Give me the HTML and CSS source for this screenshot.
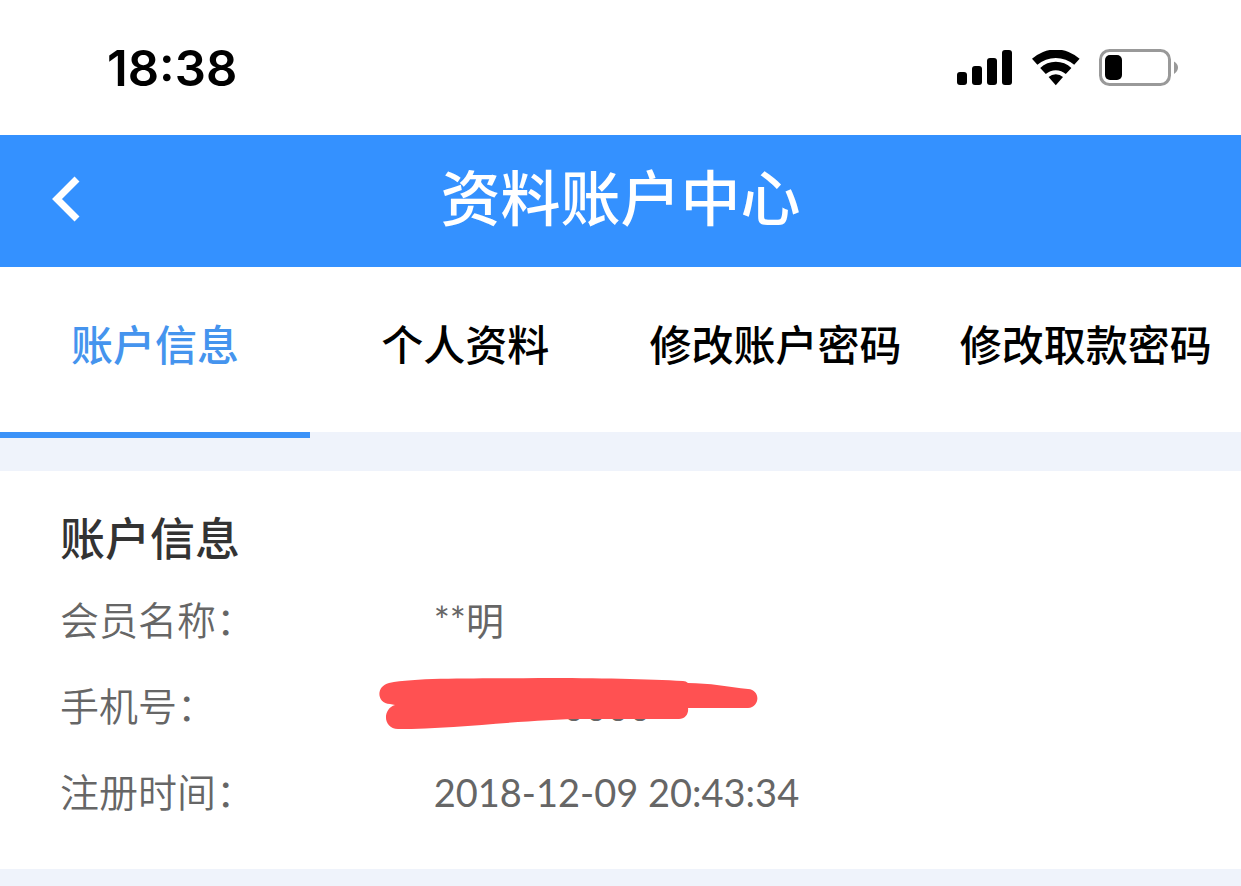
FILE: index.html
```html
<!DOCTYPE html>
<html lang="zh-CN">
<head>
<meta charset="utf-8">
<meta name="viewport" content="width=device-width, initial-scale=1">
<title>资料账户中心</title>
<link rel="stylesheet" href="styles.css">
</head>
<body>
<div class="status">
  <time class="clock">18:38</time>
  <div class="indicators">
    <svg width="56" height="36" viewBox="0 0 56 36" aria-hidden="true">
      <rect x="0" y="22" width="10" height="13" rx="3"/>
      <rect x="15" y="16" width="10" height="19" rx="3"/>
      <rect x="30" y="8" width="10" height="27" rx="3"/>
      <rect x="45" y="0" width="10" height="35" rx="3"/>
    </svg>
    <svg class="wifi" width="48" height="36" viewBox="0 0 48 36" aria-hidden="true">
      <path d="M0 8.8L5.4 14.8A28 28 0 0 1 42.2 14.8L47.6 8.8A35 35 0 0 0 0 8.8Z"/>
      <path d="M8.2 18L13.8 24A15 15 0 0 1 33.8 24L39.4 18A22.5 22.5 0 0 0 8.2 18Z"/>
      <path d="M16.6 27L23.8 35.2L31 27A10.5 10.5 0 0 0 16.6 27Z"/>
    </svg>
    <svg class="battery" width="80" height="38" viewBox="0 0 80 38" aria-hidden="true">
      <rect class="shell" x="1.5" y="1.5" width="69" height="34" rx="9"/>
      <rect x="6" y="6" width="17" height="25" rx="5"/>
      <path class="cap" d="M75 12.5Q79 15 79 18.5T75 25Z"/>
    </svg>
  </div>
</div>
<header class="bar">
  <button class="back" type="button" aria-label="返回">
    <svg width="28" height="46" viewBox="0 0 28 46" aria-hidden="true"><path d="M25 3L5 23L25 43"/></svg>
  </button>
  <h1 class="title">资料账户中心</h1>
</header>
<nav class="tabs">
  <a class="tab active" href="#account" aria-current="page">账户信息</a>
  <a class="tab" href="#profile">个人资料</a>
  <a class="tab" href="#password">修改账户密码</a>
  <a class="tab" href="#withdraw">修改取款密码</a>
</nav>
<main class="panel" id="account">
  <h2 class="heading">账户信息</h2>
  <dl class="info">
    <div class="row"><dt>会员名称：</dt><dd>**明</dd></div>
    <div class="row"><dt>手机号：</dt><dd class="masked">********0000
      <svg class="scribble" width="380" height="52" viewBox="0 0 380 52" aria-hidden="true">
        <path d="M11 26C-3 25-3 8 10 5C40-1 100 1 160 0C220 0 270 1 304 3Q307 3 309 5C330 5 350 9 369 11C382 12 381 29 369 30L309 30C310 36 306 41 300 41H205C150 41 80 51 19 51C4 51 3 31 16 27Z"/>
      </svg>
    </dd></div>
    <div class="row"><dt>注册时间：</dt><dd>2018-12-09 20:43:34</dd></div>
  </dl>
</main>
</body>
</html>
```
FILE: styles.css
```css
* { box-sizing: border-box; }
body {
  margin: 0;
  background: #eff3fb;
  color: #000;
  font-family: Lato, "Noto Sans CJK SC", sans-serif;
}
svg { display: block; }
.status {
  display: flex;
  align-items: center;
  justify-content: space-between;
  height: 135px;
  padding: 0 62px 0 107px;
  background: #fff;
}
.clock {
  padding-top: 2px;
  font: 600 49px/60px Inter, sans-serif;
}
.indicators { display: flex; align-items: center; }
.wifi { margin-left: 19px; }
.battery { margin-left: 19px; }
.shell { fill: none; stroke: #999; stroke-width: 3; }
.cap { fill: #999; }
.bar {
  display: grid;
  grid-template-columns: 132px 1fr 132px;
  align-items: center;
  height: 132px;
  background: #3491ff;
  color: #fff;
}
.back {
  height: 132px;
  padding: 0 0 4px 52px;
  border: 0;
  background: none;
  cursor: pointer;
}
.back path { fill: none; stroke: #fff; stroke-width: 7; }
.title {
  margin: 0;
  padding-bottom: 6px;
  font-size: 60px;
  font-weight: 500;
  line-height: 84px;
  text-align: center;
}
.tabs {
  display: grid;
  grid-template-columns: repeat(4, 1fr);
  height: 165px;
  background: #fff;
}
.tab {
  height: 171px;
  color: #000;
  font-size: 42px;
  font-weight: 500;
  line-height: 156px;
  text-align: center;
  text-decoration: none;
  white-space: nowrap;
}
.active { border-bottom: 6px solid #3b92f8; color: #4594ee; }
.panel {
  margin: 39px 0 0;
  padding: 36px 60px 34px;
  background: #fff;
}
.heading {
  margin: 0;
  color: #333;
  font-size: 45px;
  font-weight: 500;
  line-height: 64px;
}
.info {
  margin: 6px 0 0;
  color: #666;
  font-size: 39px;
  font-weight: 400;
}
.row {
  display: grid;
  grid-template-columns: 1fr 2fr;
  line-height: 86px;
}
.row dt { font-weight: 350; }
.row dd { margin: 0; font-size: 38px; }
.masked { position: relative; }
.scribble {
  position: absolute;
  top: 15px;
  left: -55px;
  fill: #ff5152;
}
```
